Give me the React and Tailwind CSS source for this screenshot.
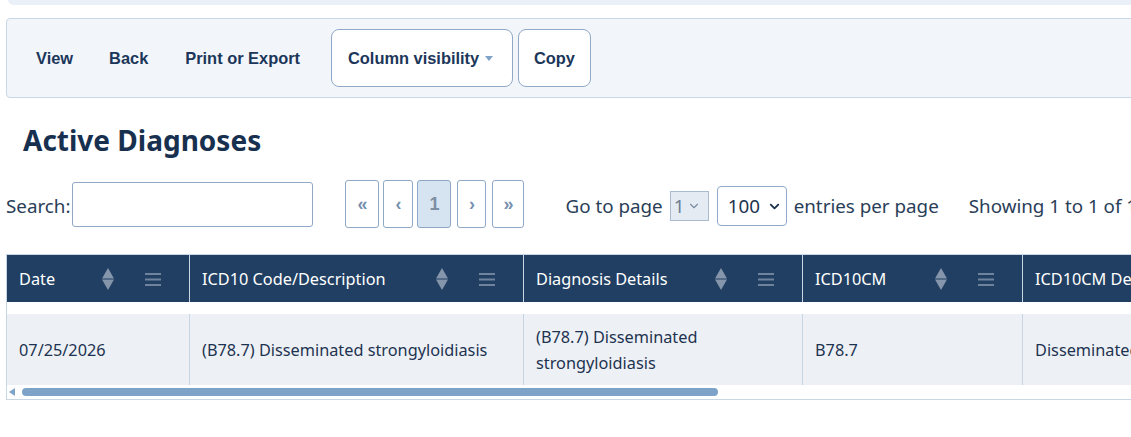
import { ChevronDown } from "lucide-react";

const columns = [
  { label: "Date", width: "w-[182px]" },
  { label: "ICD10 Code/Description", width: "w-[334px]" },
  { label: "Diagnosis Details", width: "w-[279px]" },
  { label: "ICD10CM", width: "w-[220px]" },
  { label: "ICD10CM Description", width: "w-[300px]" },
];

const row = [
  "07/25/2026",
  "(B78.7) Disseminated strongyloidiasis",
  "(B78.7) Disseminated strongyloidiasis",
  "B78.7",
  "Disseminated strongyloidiasis",
];

function SortIcon() {
  return (
    <svg width="12" height="22" viewBox="0 0 12 22" className="shrink-0">
      <path d="M6 0 L12 10.5 L0 10.5 Z" fill="#8595ab" />
      <path d="M0 11.5 L12 11.5 L6 22 Z" fill="#8595ab" />
    </svg>
  );
}

function MenuIcon() {
  return (
    <svg width="16" height="13" viewBox="0 0 16 13" className="shrink-0">
      <rect x="0" y="0" width="16" height="2" fill="#6f839d" />
      <rect x="0" y="5.5" width="16" height="2" fill="#6f839d" />
      <rect x="0" y="11" width="16" height="2" fill="#6f839d" />
    </svg>
  );
}

const PageBtn = ({ children, active, className }) => (
  <button
    className={
      "h-[48px] shrink-0 rounded-[3px] border border-[#8ea8c5] text-[18px] font-bold font-['Liberation_Sans',sans-serif] " +
      (active ? "bg-[#d6e4f2] text-[#7d8ea3] " : "bg-white text-[#7690b0] ") +
      className
    }
  >
    {children}
  </button>
);

export default function App() {
  return (
    <div className="w-[1131px] h-[437px] overflow-hidden bg-white font-['Noto_Sans',sans-serif] text-[#1d3350]">
      {/* bottom edge of the panel above */}
      <div className="ml-[8px] h-[5px] rounded-bl-[6px] bg-[#eaf0f8]" />

      {/* toolbar */}
      <div className="mt-[13px] ml-[6px] w-[1200px] h-[80px] rounded-[4px] border border-[#c9d6e5] bg-[#f2f6fb] flex items-center pl-[11px] font-['Liberation_Sans',sans-serif] font-bold text-[16.4px] text-[#1c365a]">
        <button className="px-[18px] py-2">View</button>
        <button className="px-[18px] py-2">Back</button>
        <button className="ml-[1px] px-[18px] py-2">Print or Export</button>
        <button className="ml-[13px] h-[58px] w-[182px] shrink-0 rounded-[8px] border border-[#8fa9c6] bg-white pl-[16px] flex items-center">
          Column visibility
          <span className="ml-[6px] mt-[1px] border-x-[4px] border-t-[5px] border-x-transparent border-t-[#7fa2c8]" />
        </button>
        <button className="ml-[5px] h-[58px] w-[73px] shrink-0 rounded-[8px] border border-[#8fa9c6] bg-white">
          Copy
        </button>
      </div>

      <h2 className="ml-[23px] mt-[22px] text-[28px] leading-[40px] font-bold text-[#18304f]">
        Active Diagnoses
      </h2>

      {/* search, paging and page size */}
      <div className="mt-[20px] flex items-center whitespace-nowrap text-[18.8px] text-[#2a3e58]">
        <label className="ml-[6px] flex items-center">
          <span className="pt-[4px]">Search:</span>
          <input className="ml-[2px] h-[45px] w-[241px] shrink-0 rounded-[3px] border border-[#8ea8c5] bg-white" />
        </label>
        <div className="ml-[32px] flex items-center gap-[4px]">
          <PageBtn className="w-[34px]">«</PageBtn>
          <PageBtn className="w-[30px]">‹</PageBtn>
          <PageBtn active className="w-[34px]">1</PageBtn>
          <PageBtn className="w-[29px] ml-[2px]">›</PageBtn>
          <PageBtn className="w-[32px] ml-[2px]">»</PageBtn>
        </div>
        <span className="ml-[41px] pt-[4px]">Go to page</span>
        <span className="ml-[7px] mt-[4px] h-[30px] w-[39px] shrink-0 border border-[#a9bbd0] bg-[#e5ebf3] flex items-center pl-[3px] text-[#6d7f96]">
          1<ChevronDown size={14} strokeWidth={2} className="ml-[3px] text-[#7b8ca2]" />
        </span>
        <span className="ml-[8px] mt-[4px] h-[40px] w-[70px] shrink-0 rounded-[4px] border border-[#8fa9c6] bg-white flex items-center pl-[10px] text-[#1d3350]">
          100<ChevronDown size={15} strokeWidth={3} className="ml-[7px]" />
        </span>
        <span className="ml-[7px] pt-[4px]">entries per page</span>
        <span className="ml-[30px] pt-[4px]">Showing 1 to 1 of 1 entries</span>
      </div>

      {/* table */}
      <div className="mt-[26px] ml-[6px] w-[1200px] border-l border-b border-[#c9d6e4]">
        <div className="flex border-t border-[#c9d6e4] bg-[#213f62] text-[16.3px] text-white">
          {columns.map((c, i) => (
            <div
              key={c.label}
              className={`${c.width} shrink-0 h-[47px] flex items-center pl-[12px] pr-[28px] pt-[1px] whitespace-nowrap overflow-hidden ${i > 0 ? "border-l border-[#c9d6e4]" : ""}`}
            >
              <span className="flex-1">{c.label}</span>
              <SortIcon />
              <span className="ml-[31px]">
                <MenuIcon />
              </span>
            </div>
          ))}
        </div>
        <div className="mt-[12px] flex bg-[#edf1f6] text-[16.3px] leading-[26px] text-[#1d3350]">
          {columns.map((c, i) => (
            <div
              key={c.label}
              className={`${c.width} shrink-0 h-[71px] flex items-center px-[12px] ${i > 0 ? "border-l border-[#c7d4e3]" : ""}`}
            >
              {row[i]}
            </div>
          ))}
        </div>
        {/* horizontal scroller */}
        <div className="h-[14px] flex items-center">
          <span className="ml-[2px] border-y-[4px] border-r-[6px] border-y-transparent border-r-[#7ea3c9]" />
          <div className="ml-[7px] h-[8px] w-[696px] rounded-full bg-[#7ea3c9]" />
        </div>
      </div>
    </div>
  );
}
